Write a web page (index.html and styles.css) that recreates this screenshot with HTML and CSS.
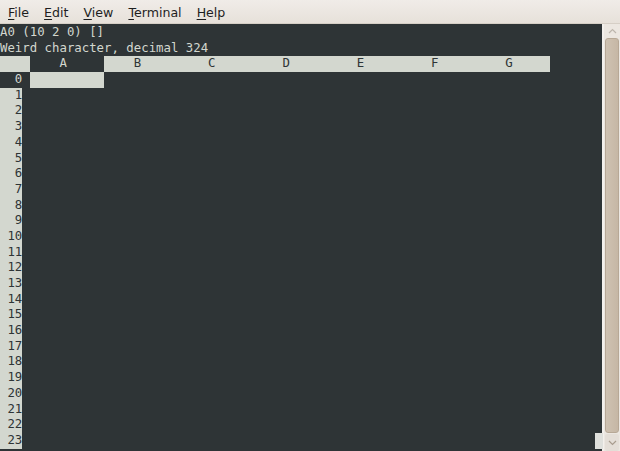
FILE: index.html
```html
<!DOCTYPE html>
<html lang="en">
<head>
    <meta charset="UTF-8">
    <title>Terminal</title>
    <link rel="stylesheet" href="styles.css">
</head>
<body>
    <div class="menubar">
        <span class="menu"><u>F</u>ile</span>
        <span class="menu"><u>E</u>dit</span>
        <span class="menu"><u>V</u>iew</span>
        <span class="menu"><u>T</u>erminal</span>
        <span class="menu"><u>H</u>elp</span>
    </div>

    <div class="window">
        <div class="terminal" id="term">
            <div class="line">A0 (10 2 0) []</div>
            <div class="line">Weird character, decimal 324</div>
            <div class="line"><span class="inv">    </span><span>    A     </span><span class="inv">    B         C         D         E         F         G     </span></div>
            <div class="line"><span>  0 </span><span class="inv">          </span></div>
        </div>

        <div class="scrollbar">
            <div class="sb-btn">
                <svg width="9" height="6" viewBox="0 0 9 6"><path d="M1 5 L4.5 1.5 L8 5" fill="none" stroke="#bdb6ad" stroke-width="1.2"/></svg>
            </div>
            <div class="sb-thumb"></div>
            <div class="sb-btn sb-bottom">
                <svg width="9" height="6" viewBox="0 0 9 6"><path d="M1 1 L4.5 4.5 L8 1" fill="none" stroke="#a89c8e" stroke-width="1.2"/></svg>
            </div>
        </div>
    </div>
    <div class="grip"></div>

    <script>
        // row labels 1..23
        const term = document.getElementById('term');
        for (let i = 1; i <= 23; i++) {
            const line = document.createElement('div');
            line.className = 'line';
            const label = document.createElement('span');
            label.className = 'inv';
            label.textContent = String(i).padStart(3, ' ');
            line.appendChild(label);
            term.appendChild(line);
        }
    </script>
</body>
</html>
```

FILE: styles.css
```css
* {
    margin: 0;
    padding: 0;
    box-sizing: border-box;
}

body {
    width: 620px;
    height: 451px;
    overflow: hidden;
    display: flex;
    flex-direction: column;
    background: #2e3436;
    position: relative;
}

.menubar {
    height: 24px;
    display: flex;
    align-items: center;
    background: linear-gradient(#f0ece8, #e7e1da);
    border-bottom: 1px solid #d6cfc6;
    font-family: "DejaVu Sans", sans-serif;
    font-size: 12.6px;
    color: #1e1e1e;
    padding-left: 8px;
}

.menu {
    padding-right: 15px;
    padding-top: 1px;
}

.menu u {
    text-decoration-thickness: 1px;
    text-underline-offset: 2px;
}

.window {
    flex: 1;
    display: flex;
    min-height: 0;
}

.terminal {
    flex: 1;
    background: #2e3436;
    color: #d3d7cf;
    font-family: "DejaVu Sans Mono", monospace;
    font-size: 12.35px;
    overflow: hidden;
    padding-top: 1px;
}

.line {
    height: 15.7px;
    line-height: 15.7px;
    white-space: pre;
}

.line span {
    display: inline-block;
    height: 15.7px;
    vertical-align: top;
}

.inv {
    background: #d3d7cf;
    color: #2e3436;
}

.scrollbar {
    width: 18px;
    display: flex;
    flex-direction: column;
    background: #ece7e1;
    border-left: 2px solid #f3f0ec;
    padding: 0 1px;
}

.sb-btn {
    height: 14px;
    display: flex;
    align-items: center;
    justify-content: center;
}

.sb-bottom {
    height: 17px;
    background: #e4ded7;
    border-radius: 2px;
}

.sb-thumb {
    flex: 1;
    background: linear-gradient(90deg, #cfc2b2, #c6b7a5);
    border: 1px solid #b7a896;
    border-radius: 3px;
    margin: 0 0 1px;
}

.grip {
    position: absolute;
    right: 17px;
    bottom: 2px;
    width: 8px;
    height: 16px;
    background: #dfe0dc;
}
```
